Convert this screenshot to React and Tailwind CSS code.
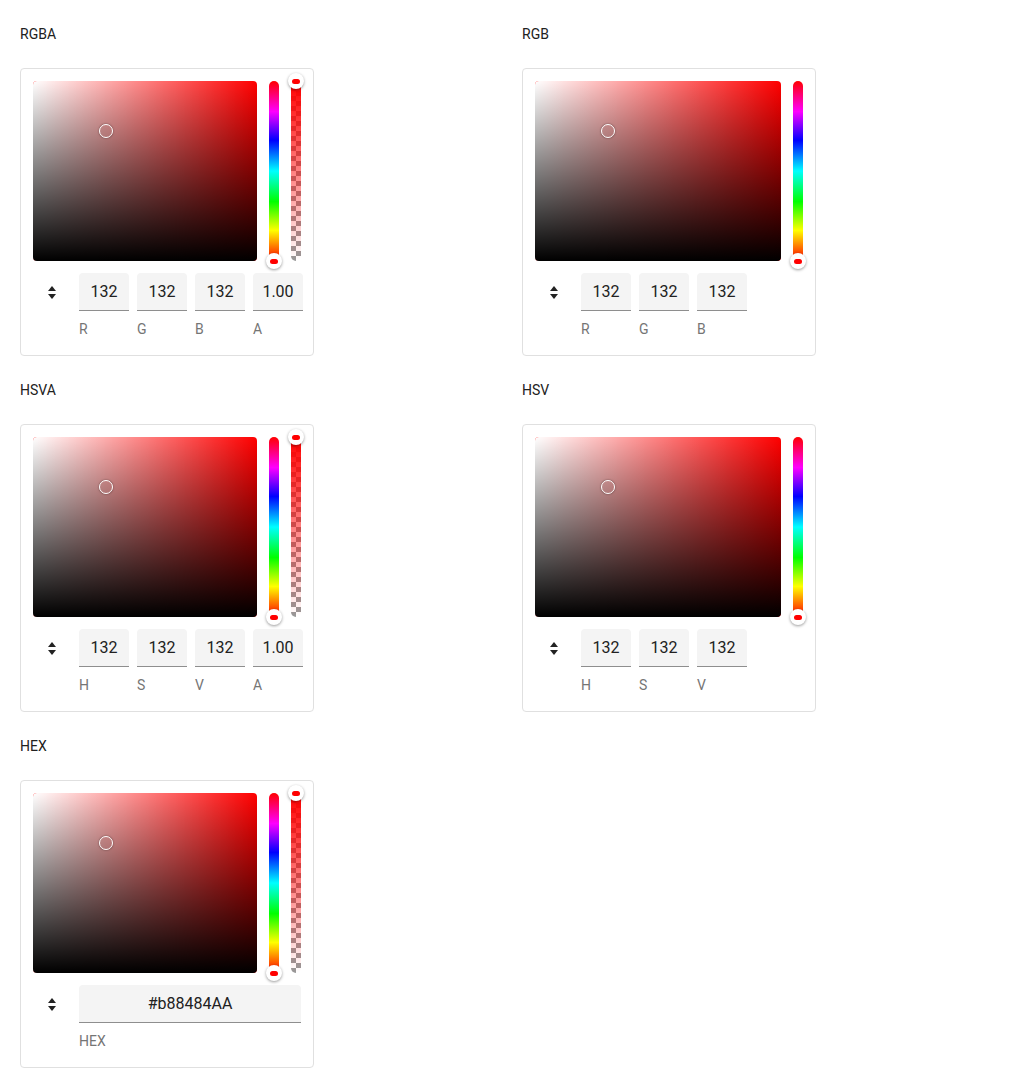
const pickers = [
  { title: "RGBA", alpha: true, fields: [["132", "R"], ["132", "G"], ["132", "B"], ["1.00", "A"]] },
  { title: "RGB", alpha: false, fields: [["132", "R"], ["132", "G"], ["132", "B"]] },
  { title: "HSVA", alpha: true, fields: [["132", "H"], ["132", "S"], ["132", "V"], ["1.00", "A"]] },
  { title: "HSV", alpha: false, fields: [["132", "H"], ["132", "S"], ["132", "V"]] },
  { title: "HEX", alpha: true, hex: true, fields: [["#b88484AA", "HEX"]] },
];

function Thumb({ className }) {
  return (
    <div className={`absolute w-4 h-4 rounded-full bg-white shadow-[0_1px_3px_rgba(0,0,0,0.4)] flex items-center justify-center ${className}`}>
      <div className="w-2 h-[5px] rounded-full bg-[#ff0000]" />
    </div>
  );
}

function SortIcon() {
  return (
    <svg width="8" height="13" viewBox="0 0 8 13" className="text-[#222]">
      <path d="M4 0 L8 5 L0 5 Z" fill="currentColor" />
      <path d="M0 8 L8 8 L4 13 Z" fill="currentColor" />
    </svg>
  );
}

function Picker({ picker }) {
  return (
    <div className="w-[294px] border border-[#e0e0e0] rounded p-3 bg-white">
      <div className="flex gap-3 h-[180px]">
        <div className="relative flex-1 rounded bg-[#ff0000] overflow-hidden">
          <div className="absolute inset-0 bg-linear-to-r from-white to-transparent" />
          <div className="absolute inset-0 bg-linear-to-t from-black to-transparent" />
          <div className="absolute left-[66px] top-[43px] w-[14px] h-[14px] rounded-full border-[1.5px] border-white shadow-[0_0_2px_rgba(0,0,0,0.5)]" />
        </div>
        <div className="relative w-[10px]">
          <div className="h-full rounded-full bg-[linear-gradient(to_bottom,#f00_0%,#f0f_17%,#00f_33%,#0ff_50%,#0f0_67%,#ff0_83%,#f00_100%)]" />
          <Thumb className="left-[-3px] bottom-[-8px]" />
        </div>
        {picker.alpha && (
          <div className="relative w-[10px]">
            <div className="h-full rounded-full overflow-hidden bg-white bg-[repeating-conic-gradient(#999_0%_25%,#fff_0%_50%)] bg-size-[10px_10px]">
              <div className="h-full bg-linear-to-b from-[#ff0000] to-transparent" />
            </div>
            <Thumb className="left-[-3px] top-[-8px]" />
          </div>
        )}
      </div>
      <div className="flex gap-2 mt-3 pb-1">
        <div className="w-[38px] h-[38px] flex items-center justify-center shrink-0">
          <SortIcon />
        </div>
        {picker.fields.map(([value, label], i) => (
          <div key={i} className={picker.hex ? "flex-1" : "w-[50px] shrink-0"}>
            <div className="h-[38px] bg-[#f4f4f4] rounded-t border-b border-[#8e8e8e] flex items-center justify-center text-base text-[#212121]">
              {value}
            </div>
            <div className="mt-2 h-5 text-sm leading-5 text-[#757575]">{label}</div>
          </div>
        ))}
      </div>
    </div>
  );
}

export default function App() {
  return (
    <div className="w-[1024px] min-h-[1088px] bg-white px-5 pb-5 font-['Roboto',sans-serif]">
      <div className="grid grid-cols-2 gap-x-5">
        {pickers.map((p) => (
          <div key={p.title}>
            <div className="pt-6 h-[68px] text-sm leading-5 text-[#212121]">{p.title}</div>
            <Picker picker={p} />
          </div>
        ))}
      </div>
    </div>
  );
}
